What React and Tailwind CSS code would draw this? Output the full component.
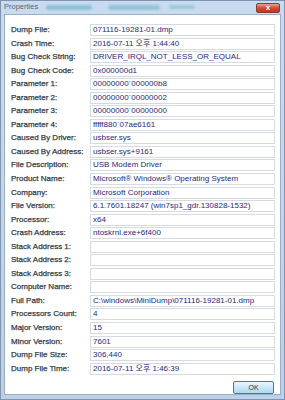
import React from 'react'

const ROWS = [
  ['Dump File:', '071116-19281-01.dmp'],
  ['Crash Time:', '2016-07-11 오후 1:44:40'],
  ['Bug Check String:', 'DRIVER_IRQL_NOT_LESS_OR_EQUAL'],
  ['Bug Check Code:', '0x000000d1'],
  ['Parameter 1:', '00000000`000000b8'],
  ['Parameter 2:', '00000000`00000002'],
  ['Parameter 3:', '00000000`00000000'],
  ['Parameter 4:', 'fffff880`07ae6161'],
  ['Caused By Driver:', 'usbser.sys'],
  ['Caused By Address:', 'usbser.sys+9161'],
  ['File Description:', 'USB Modem Driver'],
  ['Product Name:', 'Microsoft® Windows® Operating System'],
  ['Company:', 'Microsoft Corporation'],
  ['File Version:', '6.1.7601.18247 (win7sp1_gdr.130828-1532)'],
  ['Processor:', 'x64'],
  ['Crash Address:', 'ntoskrnl.exe+6f400'],
  ['Stack Address 1:', ''],
  ['Stack Address 2:', ''],
  ['Stack Address 3:', ''],
  ['Computer Name:', ''],
  ['Full Path:', 'C:\\windows\\MiniDump\\071116-19281-01.dmp'],
  ['Processors Count:', '4'],
  ['Major Version:', '15'],
  ['Minor Version:', '7601'],
  ['Dump File Size:', '306,440'],
  ['Dump File Time:', '2016-07-11 오후 1:46:39'],
]

const FONT = { fontFamily: '"Liberation Sans", "Noto Sans CJK KR", sans-serif' }

export default function App() {
  return (
    <div
      className="w-[285px] h-[400px] flex flex-col bg-gradient-to-b from-[#c9dbf0] to-[#bcd0e8] border border-[#7f95ad] overflow-hidden"
      style={FONT}
    >
      {/* Title bar */}
      <div className="h-[12px] flex items-center pl-[3px] pr-[4px]">
        <span className="text-[7.5px] leading-none text-[#56657a]">Properties</span>
        <div className="ml-[8px] w-[46px] h-[5px] rounded-full bg-[#8cc3cf] blur-[1px]" />
        <div className="ml-[16px] w-[52px] h-[5px] rounded-full bg-[#93c6d3] blur-[1px]" />
        <div className="ml-[9px] w-[26px] h-[4px] rounded-full bg-[#9fcbd6] blur-[1px]" />
        <div className="ml-auto mt-[2px] w-[24px] h-[10px] rounded-[2px] border border-[#8a3a2e] bg-gradient-to-b from-[#e9a28f] via-[#cf4b32] to-[#c2361e] flex items-center justify-center">
          <span className="text-[8px] leading-none font-bold text-white">x</span>
        </div>
      </div>

      {/* Client area */}
      <div className="flex-1 mx-[3px] mt-[1px] mb-[4px] bg-white border border-[#9aaec4] flex flex-col pl-[6px] pr-[5px] pt-[9px]">
        <div className="flex flex-col gap-[1.56px]">
          {ROWS.map(([label, value], i) => (
            <div key={i} className="h-[12px] flex items-center">
              <span className="w-[79px] shrink-0 text-[8px] leading-none text-[#343c48] [-webkit-text-stroke:0.25px_#343c48] whitespace-nowrap">{label}</span>
              <div className="flex-1 h-full border border-[#d6dae1] flex items-center pl-[2px] overflow-hidden">
                <span className="text-[8px] leading-none text-[#1f2a7c] whitespace-nowrap">{value}</span>
              </div>
            </div>
          ))}
        </div>

        <div className="flex justify-end mt-[6px] pr-[1px]">
          <button className="w-[41px] h-[13px] rounded-[2px] border border-[#3d7bad] bg-gradient-to-b from-[#eaf6fd] to-[#a9d9f2] flex items-center justify-center">
            <span className="text-[7px] leading-none text-[#333]">OK</span>
          </button>
        </div>
      </div>
    </div>
  )
}
